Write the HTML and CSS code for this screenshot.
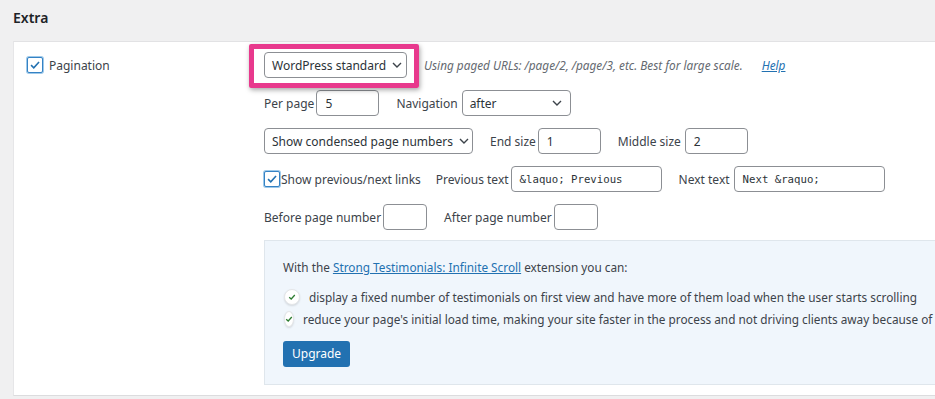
FILE: index.html
```html
<!DOCTYPE html>
<html lang="en">
<head>
  <meta charset="utf-8">
  <title>Extra settings</title>
  <link rel="stylesheet" href="styles.css">
</head>
<body>

  <h2 class="section-title">Extra</h2>

  <section class="panel">

    <div class="panel-label">
      <span class="check checked">
        <svg viewBox="0 0 16 16" width="14" height="14"><path d="M3.5 8.2 L6.6 11.2 L12.6 4.6" fill="none" stroke="#2271b1" stroke-width="1.8"/></svg>
      </span>
      <span>Pagination</span>
    </div>

    <div class="panel-body">

      <div class="row">
        <div class="highlight">
          <div class="select select-type">
            <span>WordPress standard</span>
            <svg class="chev" viewBox="0 0 10 6" width="10" height="6"><path d="M1 1 L5 5 L9 1" fill="none" stroke="#3c434a" stroke-width="1.4"/></svg>
          </div>
        </div>
        <span class="desc">Using paged URLs: /page/2, /page/3, etc. Best for large scale.</span>
        <a class="help" href="#">Help</a>
      </div>

      <div class="row">
        <label class="lbl lbl-narrow">Per page</label>
        <div class="input w-num">5</div>
        <label class="lbl">Navigation</label>
        <div class="select w-nav">
          <span>after</span>
          <svg class="chev" viewBox="0 0 10 6" width="10" height="6"><path d="M1 1 L5 5 L9 1" fill="none" stroke="#3c434a" stroke-width="1.4"/></svg>
        </div>
      </div>

      <div class="row">
        <div class="select w-mode">
          <span>Show condensed page numbers</span>
          <svg class="chev" viewBox="0 0 10 6" width="10" height="6"><path d="M1 1 L5 5 L9 1" fill="none" stroke="#3c434a" stroke-width="1.4"/></svg>
        </div>
        <label class="lbl lbl-narrow">End size</label>
        <div class="input w-num">1</div>
        <label class="lbl">Middle size</label>
        <div class="input w-num">2</div>
      </div>

      <div class="row">
        <span class="check checked small">
          <svg viewBox="0 0 16 16" width="14" height="14"><path d="M3.5 8.2 L6.6 11.2 L12.6 4.6" fill="none" stroke="#2271b1" stroke-width="1.8"/></svg>
        </span>
        <label class="lbl lbl-tight">Show previous/next links</label>
        <label class="lbl lbl-prev">Previous text</label>
        <div class="input w-text mono">&amp;laquo; Previous</div>
        <label class="lbl">Next text</label>
        <div class="input w-text mono">Next &amp;raquo;</div>
      </div>

      <div class="row">
        <label class="lbl lbl-narrow">Before page number</label>
        <div class="input w-tiny"></div>
        <label class="lbl lbl-narrow">After page number</label>
        <div class="input w-tiny"></div>
      </div>

      <div class="promo">
        <p class="promo-intro">With the <a href="#">Strong Testimonials: Infinite Scroll</a> extension you can:</p>
        <ul class="promo-list">
          <li>
            <span class="tick"><svg viewBox="0 0 10 10" width="8" height="8"><path d="M1.5 5.2 L4 7.5 L8.5 2.5" fill="none" stroke="#2e7d32" stroke-width="1.6"/></svg></span>
            display a fixed number of testimonials on first view and have more of them load when the user starts scrolling
          </li>
          <li>
            <span class="tick"><svg viewBox="0 0 10 10" width="8" height="8"><path d="M1.5 5.2 L4 7.5 L8.5 2.5" fill="none" stroke="#2e7d32" stroke-width="1.6"/></svg></span>
            reduce your page's initial load time, making your site faster in the process and not driving clients away because of slow loading
          </li>
        </ul>
        <a class="btn-upgrade" href="#">Upgrade</a>
      </div>

    </div>
  </section>

</body>
</html>
```

FILE: styles.css
```css
/* ******************** global ******************* */

* {
  box-sizing: border-box;
}

html,
body {
  margin: 0;
  padding: 0;
  height: 100%;
  overflow: hidden;
}

body {
  background-color: #f0f0f1;
  color: #3c434a;
  font-family: "Noto Sans", "Open Sans", sans-serif;
  font-size: 12px;
}

a {
  color: #2271b1;
}

/* ******************** heading ******************* */

.section-title {
  margin: 0;
  padding: 8px 0 0 13px;
  height: 41px;
  font-size: 14px;
  font-weight: 600;
  color: #1d2327;
}

/* ******************** panel ******************* */

.panel {
  display: flex;
  margin-left: 13px;
  padding: 10px 0 10px 0;
  background-color: #fff;
  border-top: 1px solid #e2e2e4;
  border-left: 1px solid #e6e6e8;
  border-bottom: 1px solid #dcdcde;
  width: 1100px;
}

.panel-label {
  display: flex;
  align-items: center;
  gap: 6px;
  width: 250px;
  height: 26px;
  padding-left: 13px;
  color: #3c434a;
}

.panel-body {
  display: flex;
  flex-direction: column;
  gap: 12px;
}

.row {
  display: flex;
  align-items: center;
  height: 26px;
}

/* ******************** controls ******************* */

.check {
  display: flex;
  align-items: center;
  justify-content: center;
  width: 16px;
  height: 16px;
  border: 1px solid #3582c4;
  border-radius: 2px;
  background-color: #fff;
  box-shadow: 0 0 0 1px #9ec9ea;
}

.lbl {
  margin-right: 4px;
  white-space: nowrap;
}

.lbl + .lbl,
.input + .lbl,
.select + .lbl {
  margin-left: 17px;
}

.lbl-narrow {
  margin-right: 2px;
}

.lbl-tight {
  margin-left: 1px;
}

.lbl + .lbl-prev {
  margin-left: 11px;
  margin-right: 2px;
}

.input,
.select {
  display: flex;
  align-items: center;
  height: 26px;
  padding: 0 8px;
  border: 1px solid #8c8f94;
  border-radius: 4px;
  background-color: #fff;
  color: #2c3338;
  white-space: nowrap;
}

.select {
  justify-content: space-between;
  padding: 0 8px 0 7px;
}

.chev {
  margin-left: 6px;
  flex-shrink: 0;
}

.mono {
  font-family: "DejaVu Sans Mono", "Liberation Mono", monospace;
  font-size: 10.7px;
}

.select-type { width: 143px; }
.w-nav { width: 109px; }
.w-mode { width: 209px; }
.w-num { width: 63px; }
.w-text { width: 151px; }
.w-tiny { width: 44px; }

/* ******************** highlight ******************* */

.highlight {
  position: relative;
  margin-right: 17px;
}

.highlight::after {
  content: "";
  position: absolute;
  left: -15px;
  top: -8px;
  right: -12px;
  bottom: -10px;
  border: 5px solid #e8398d;
  border-radius: 2px;
  box-shadow: 1px 2px 5px rgba(0, 0, 0, 0.35);
}

.desc {
  font-style: italic;
  color: #646970;
  font-size: 11.8px;
}

.help {
  margin-left: 19px;
  font-style: italic;
  font-size: 11.8px;
}

/* ******************** promo ******************* */

.promo {
  margin-top: -2px;
  width: 700px;
  padding: 18px 18px 17px 18px;
  background-color: #f0f6fc;
  border: 1px solid #dfe6ec;
  border-right: none;
  white-space: nowrap;
  font-size: 11.8px;
}

.promo-intro {
  margin: 0 0 11px 0;
}

.promo-list {
  list-style: none;
  margin: 0 0 11px 0;
  padding: 0;
}

.promo-list li {
  display: flex;
  align-items: center;
  height: 22px;
}

.tick {
  display: inline-flex;
  align-items: center;
  justify-content: center;
  width: 16px;
  height: 16px;
  margin: 0 9px 0 1px;
  border-radius: 50%;
  background-color: #fff;
  border: 1px solid #e4e6e8;
  box-shadow: 0 1px 2px rgba(0, 0, 0, 0.12);
}

.btn-upgrade {
  display: inline-block;
  height: 26px;
  line-height: 26px;
  padding: 0 9px;
  background-color: #2271b1;
  border-radius: 3px;
  color: #fff;
  font-size: 12px;
  text-decoration: none;
}
```
